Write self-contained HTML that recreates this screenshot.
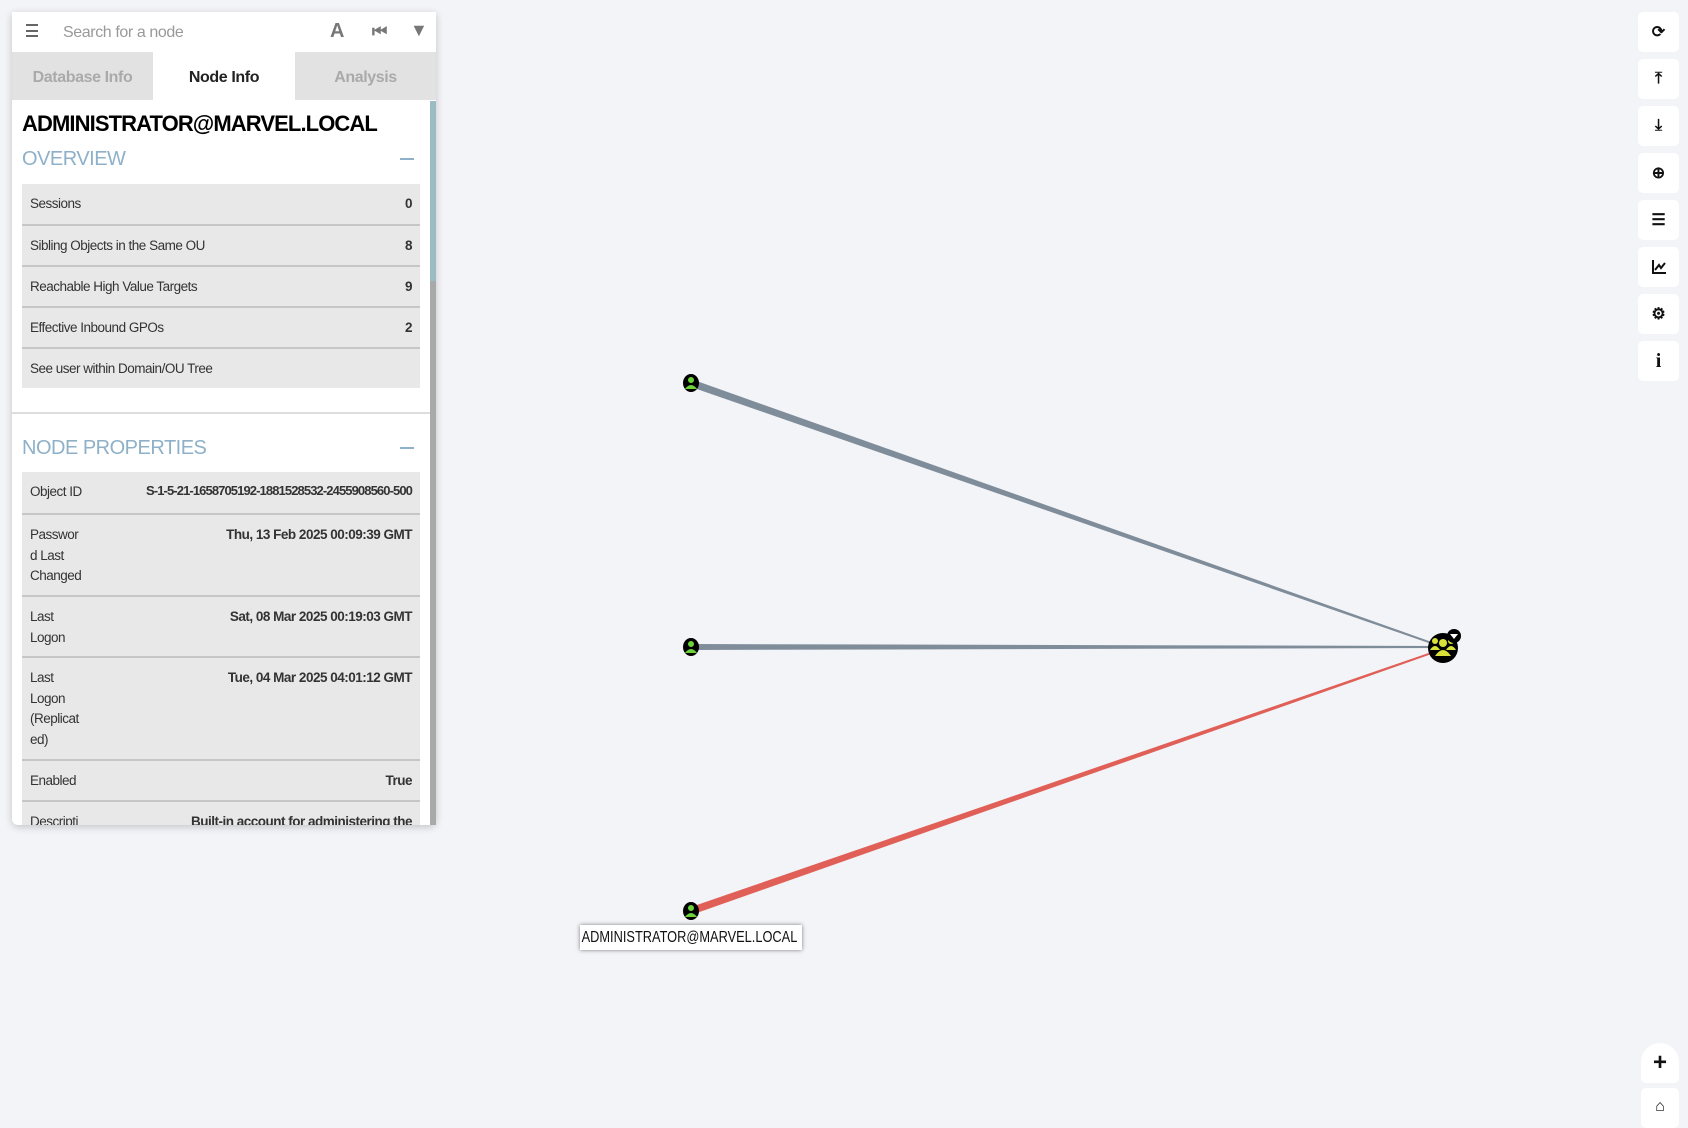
<!DOCTYPE html>
<html><head><meta charset="utf-8"><style>
*{box-sizing:border-box;margin:0;padding:0}
body{width:1688px;height:1112px;overflow:hidden;background:#f3f4f8;font-family:"Liberation Sans",sans-serif;position:relative}
.panel{position:absolute;left:12px;top:12px;width:424px;height:813px;background:#fff;box-shadow:0 2px 8px rgba(0,0,0,.2);border-radius:0 0 6px 6px;overflow:hidden}
.search{height:40px;position:relative}
.search .ph{position:absolute;left:51px;top:12px;font-size:16px;color:#999;letter-spacing:-.4px}
.tabs{display:flex;height:48px}
.tab{width:141px;display:flex;align-items:center;justify-content:center;font-size:16px;font-weight:bold;color:#aaa;background:#e2e2e2;letter-spacing:-.4px;padding-top:4px}
.tab.act{background:#fff;color:#222;width:142px}
.content{position:absolute;left:0;top:88px;width:418px;padding:0 10px}
h1{font-size:22px;font-weight:bold;color:#000;margin-top:11px;letter-spacing:-.9px}
.sec{display:flex;justify-content:space-between;align-items:center;color:#8eb0c8;font-size:20px;margin-top:8px;height:28px;letter-spacing:-.5px}
.sec .m{width:14px;height:2px;background:#8eb0c8;margin-right:6px}
table{width:398px;border-collapse:collapse;background:#e8e8e8;font-size:13.5px;color:#333;margin-top:11px;letter-spacing:-.5px}
td{padding:0 8px;border-bottom:2px solid #c6c6c6;vertical-align:top;line-height:20.5px;white-space:nowrap}
td.v{text-align:right;font-weight:bold}
.sb{position:absolute;left:430px;top:101px;width:6px;height:724px;background:#a9a9a9}
.sb i{display:block;height:180px;background:#9bbcc3}
.rb{position:absolute;left:1638px;width:41px;height:40px;background:#fff;border-radius:5px;display:flex;align-items:center;justify-content:center;font-size:16px;color:#111;font-weight:bold}
</style></head><body>
<svg width="1688" height="1112" style="position:absolute;left:0;top:0">
<polygon points="691,379 691,387 1443,648 1443,646" fill="#7f8c99"/>
<polygon points="691,644 691,650 1443,648 1443,646" fill="#7f8c99"/>
<polygon points="691,907 691,915 1443,650 1443,648" fill="#e06058"/>
<ellipse cx="691" cy="383" rx="8" ry="9" fill="#000"/>
<circle cx="691" cy="380" r="3" fill="#6ad43a"/><path d="M685,389 q6,-8 12,0z" fill="#6ad43a"/>
<ellipse cx="691" cy="647" rx="8" ry="9" fill="#000"/>
<circle cx="691" cy="644" r="3" fill="#6ad43a"/><path d="M685,653 q6,-8 12,0z" fill="#6ad43a"/>
<ellipse cx="691" cy="911" rx="8" ry="9" fill="#000"/>
<circle cx="691" cy="908" r="3" fill="#6ad43a"/><path d="M685,917 q6,-8 12,0z" fill="#6ad43a"/>
<circle cx="1443" cy="648" r="15" fill="#000"/>
<circle cx="1443" cy="643" r="4" fill="#d8e03a"/><path d="M1435,656 q8,-12 16,0z" fill="#d8e03a"/>
<circle cx="1435" cy="641" r="3" fill="#d8e03a"/><circle cx="1451" cy="641" r="3" fill="#d8e03a"/>
<path d="M1430,650 q5,-8 10,0z M1446,650 q5,-8 10,0z" fill="#d8e03a"/>
<circle cx="1454" cy="636" r="7" fill="#000"/><path d="M1450,634 h8 l-4,5z" fill="#fff"/>
</svg>
<div style="position:absolute;left:580px;top:925px;width:222px;height:25px;background:#fff;box-shadow:0 0 4px rgba(0,0,0,.5);overflow:hidden"><span style="display:inline-block;font-size:16px;line-height:25px;color:#111;white-space:nowrap;transform:scaleX(.8);transform-origin:0 0;padding-left:2px">ADMINISTRATOR@MARVEL.LOCAL</span></div>
<div class="panel">
<div class="search">
<div style="position:absolute;left:14px;top:12px;width:12px;height:13px;border-top:2px solid #666;border-bottom:2px solid #666"><div style="margin-top:3.5px;height:2px;background:#666"></div></div>
<div class="ph">Search for a node</div>
<div style="position:absolute;left:318px;top:8px;font-weight:bold;font-size:20px;color:#777">A</div>
<div style="position:absolute;left:360px;top:10px;font-weight:bold;font-size:17px;color:#777">⏮</div>
<div style="position:absolute;left:398px;top:8px;font-size:18px;color:#777">▼</div>
</div>
<div class="tabs"><div class="tab">Database Info</div><div class="tab act">Node Info</div><div class="tab">Analysis</div></div>
<div class="content">
<h1>ADMINISTRATOR@MARVEL.LOCAL</h1>
<div class="sec">OVERVIEW<span class="m"></span></div>
<table>
<tr style="height:41px"><td style="padding-top:10px">Sessions</td><td class="v" style="padding-top:10px">0</td></tr>
<tr style="height:41px"><td style="padding-top:10px">Sibling Objects in the Same OU</td><td class="v" style="padding-top:10px">8</td></tr>
<tr style="height:41px"><td style="padding-top:10px">Reachable High Value Targets</td><td class="v" style="padding-top:10px">9</td></tr>
<tr style="height:41px"><td style="padding-top:10px">Effective Inbound GPOs</td><td class="v" style="padding-top:10px">2</td></tr>
<tr style="height:40px"><td style="padding-top:10px;border:0">See user within Domain/OU Tree</td><td style="border:0"></td></tr>
</table>
</div>
<div style="position:absolute;left:0;top:400px;width:418px;height:2px;background:#ddd"></div>
<div class="content" style="top:402px">
<div class="sec" style="margin-top:20px">NODE PROPERTIES<span class="m"></span></div>
<table style="margin-top:10px">
<tr style="height:42px"><td style="padding-top:10px;width:90px">Object ID</td><td class="v" style="padding-top:9px;font-size:13px;letter-spacing:-.9px">S-1-5-21-1658705192-1881528532-2455908560-500</td></tr>
<tr style="height:82px"><td style="padding-top:10px">Passwor<br>d Last<br>Changed</td><td class="v" style="padding-top:10px">Thu, 13 Feb 2025 00:09:39 GMT</td></tr>
<tr style="height:61px"><td style="padding-top:10px">Last<br>Logon</td><td class="v" style="padding-top:10px">Sat, 08 Mar 2025 00:19:03 GMT</td></tr>
<tr style="height:103px"><td style="padding-top:10px">Last<br>Logon<br>(Replicat<br>ed)</td><td class="v" style="padding-top:10px">Tue, 04 Mar 2025 04:01:12 GMT</td></tr>
<tr style="height:41px"><td style="padding-top:10px">Enabled</td><td class="v" style="padding-top:10px">True</td></tr>
<tr style="height:41px"><td style="padding-top:10px;border:0">Descripti</td><td class="v" style="padding-top:10px;border:0">Built-in account for administering the</td></tr>
</table>
</div>
</div>
<div class="sb"><i></i></div>
<div class="rb" style="top:12px">⟳</div>
<div class="rb" style="top:59px">⤒</div>
<div class="rb" style="top:106px">⤓</div>
<div class="rb" style="top:153px">⊕</div>
<div class="rb" style="top:200px">☰</div>
<div class="rb" style="top:247px"><svg width="16" height="16"><path d="M2,1 V14 H15 M4,11 L8,6 L10,9 L14,4" stroke="#111" stroke-width="2" fill="none"/></svg></div>
<div class="rb" style="top:294px">⚙</div>
<div class="rb" style="top:341px;font-family:'Liberation Serif',serif;font-size:20px">i</div>
<div class="rb" style="top:1043px;left:1641px;width:38px;border-radius:19px 19px 5px 5px;font-size:24px">+</div>
<div class="rb" style="top:1088px;left:1641px;width:38px;align-items:flex-start;padding-top:10px;font-size:16px">⌂</div>
</body></html>
